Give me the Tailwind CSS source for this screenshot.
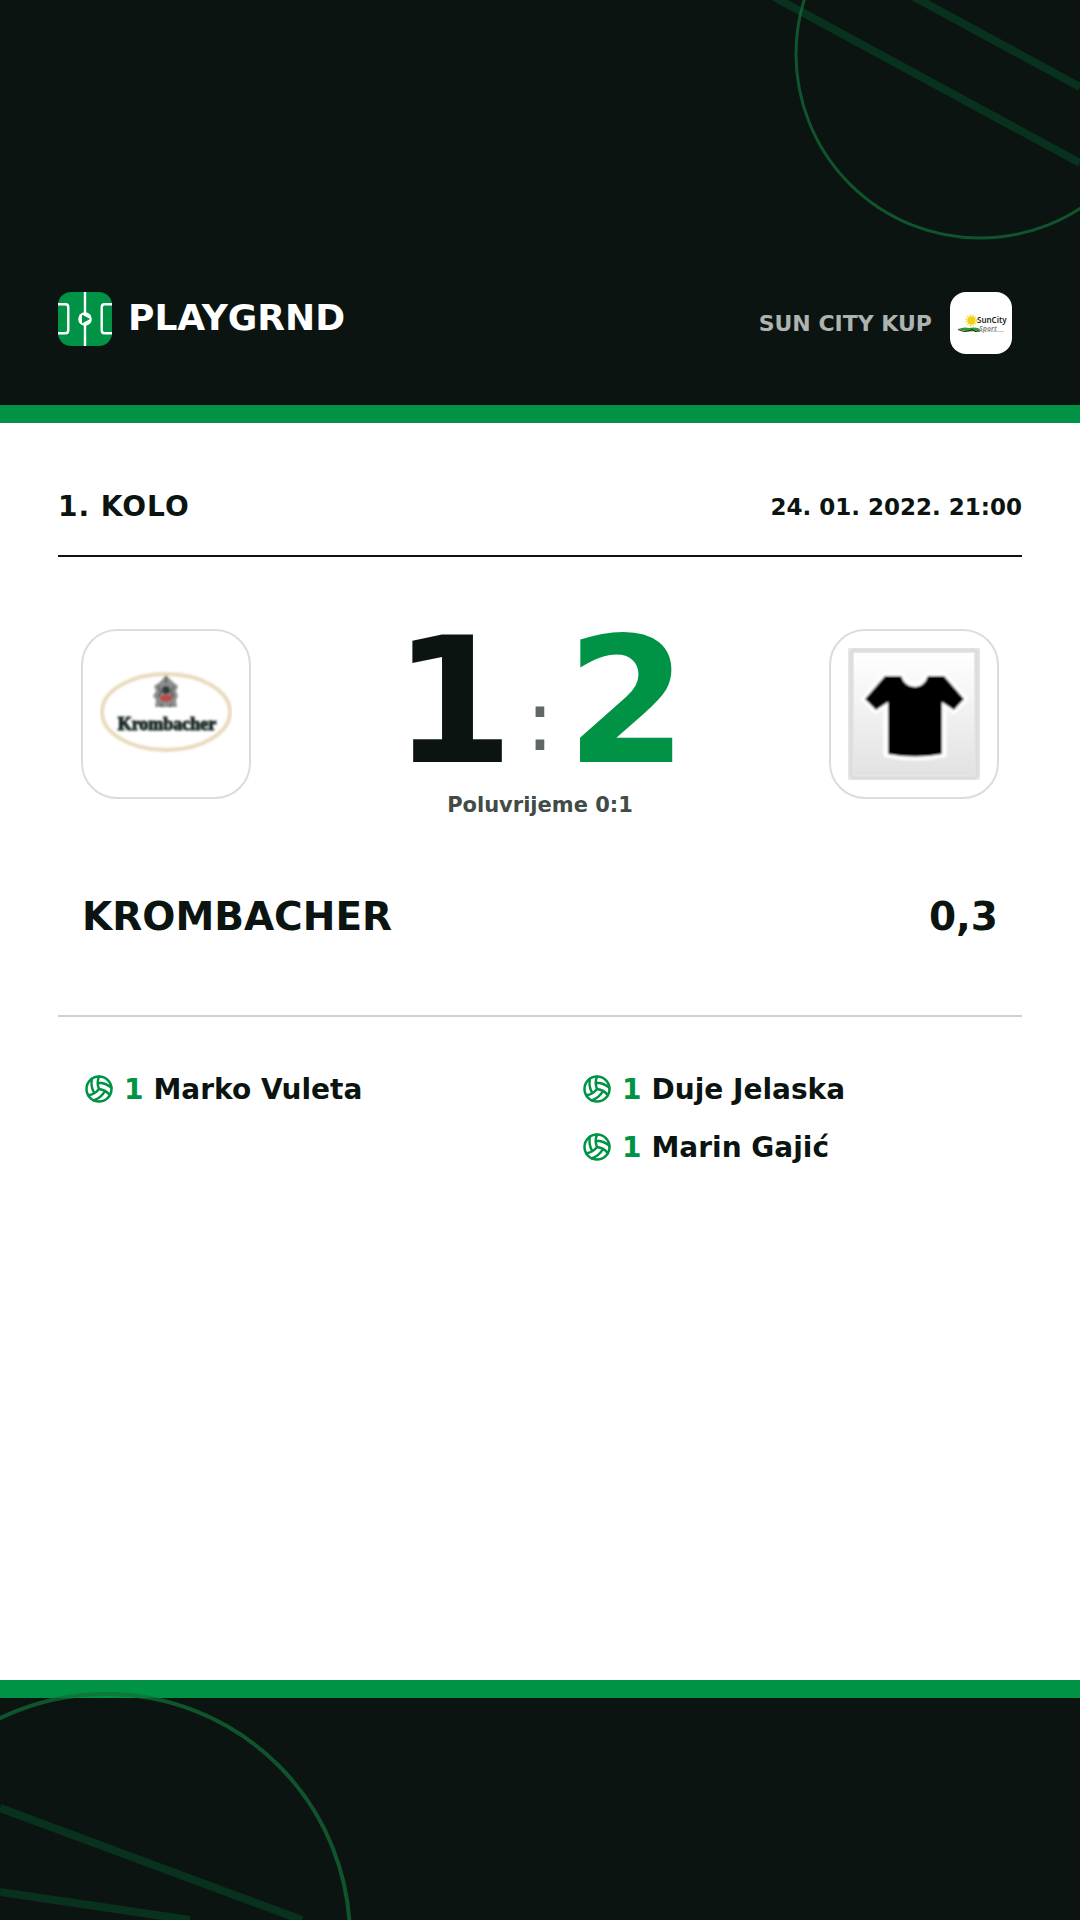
<!DOCTYPE html>
<html lang="hr">
<head>
<meta charset="utf-8">
<meta name="viewport" content="width=device-width, initial-scale=1">
<title>Krombacher 1:2 0,3</title>
<script src="https://cdn.jsdelivr.net/npm/@tailwindcss/browser@4"></script>
</head>
<body class="relative flex min-h-screen flex-col overflow-x-hidden bg-white font-['DejaVu_Sans',sans-serif] font-bold text-[#0b1411]">
<svg width="0" height="0" class="absolute" aria-hidden="true">
  <symbol id="ball" viewBox="0 0 24 24">
    <g fill="none" stroke="currentColor" stroke-width="2" stroke-linecap="round" stroke-linejoin="round">
      <circle cx="12" cy="12" r="10"/>
      <path d="M11.1 7.1a16.55 16.55 0 0 1 10.9 4M12 12a12.6 12.6 0 0 1-8.7 5M16.8 13.6a16.55 16.55 0 0 1-9 7.5M20.7 17a12.8 12.8 0 0 0-8.7-5 13.3 13.3 0 0 1 0-10M6.3 3.8a16.55 16.55 0 0 0 1.9 11.5"/>
    </g>
  </symbol>
</svg>

<header class="relative border-b-18 border-[#009345] bg-[#0b1411] px-[58px] pt-[292px] pb-[51px]">
  <svg class="absolute top-0 right-0" width="340" height="260" viewBox="740 0 340 260" fill="none" aria-hidden="true">
    <path d="M765-8L1080 163M905-8L1080 87" stroke="#009345" stroke-width="8" stroke-opacity=".24"/>
    <circle cx="980" cy="54" r="184" stroke="#116d38" stroke-width="3" stroke-opacity=".72"/>
  </svg>
  <div class="relative flex items-start justify-between">
    <div class="flex items-center gap-4">
      <svg width="54" height="54" viewBox="0 0 54 54" fill="none" aria-hidden="true">
        <rect width="54" height="54" rx="13" fill="#009345"/>
        <path d="M27 0V54M0 12.3H7.5Q10.3 12.3 10.3 15.5V38Q10.3 41.3 7.5 41.3H0M54 12.3H46.5Q43.7 12.3 43.7 15.5V38Q43.7 41.3 46.5 41.3H54" stroke="#fff" stroke-width="2.4"/>
        <circle cx="27" cy="27" r="6.8" fill="#fff"/>
        <path d="M24.5 23.5L31 27L24.5 30.5Z" fill="#009345" stroke="#009345" stroke-width="1.2" stroke-linejoin="round"/>
      </svg>
      <span class="pb-[2px] text-4xl text-white">PLAYGRND</span>
    </div>
    <div class="flex items-center gap-[18px] pr-[10px]">
      <span class="text-[22px] text-[#adb3b0]">SUN CITY KUP</span>
      <svg width="62" height="62" viewBox="0 0 62 62" role="img" aria-label="SunCity Sport">
        <rect width="62" height="62" rx="16" fill="#fff"/>
        <circle cx="21.5" cy="28.5" r="5.3" fill="none" stroke="#f7dc4a" stroke-width="1.5" stroke-dasharray="1.5 1.3"/>
        <circle cx="21.5" cy="28.5" r="4.2" fill="#f5cf12"/>
        <text x="27" y="31" font-size="8" font-weight="600" font-family="Noto Sans, sans-serif" fill="#222">SunCity</text>
        <path d="M8 37Q14 34.5 19 36Q25 35 29 36.5Q31 38 30 39Q26 38.5 22 39.5Q14 39 8 37Z" fill="#2f9b2f"/>
        <path d="M8 37.5L14 39.5L19 39L22 37.5L25 39.5L30 39" fill="none" stroke="#222" stroke-width="1"/>
        <text x="29" y="39" font-size="7" font-style="italic" font-weight="700" font-family="Open Sans, sans-serif" fill="#8a8a8a">Sport</text>
        <path d="M30 39.5H54" stroke="#bbb" stroke-width=".8"/>
      </svg>
    </div>
  </div>
</header>

<main class="flex-1 px-[58px]">
  <div class="flex items-center justify-between border-b-2 border-[#0b1411] pt-[64px] pb-[28px]">
    <h2 class="text-[28px] leading-10 tracking-[1px]">1. KOLO</h2>
    <time datetime="2022-01-24T21:00" class="text-[23px] leading-10">24. 01. 2022. 21:00</time>
  </div>

  <section class="border-b-2 border-[#cdd3d0] px-[23px] pt-[72px] pb-[68px]">
    <div class="flex items-start justify-between">
      <div class="grid size-[170px] place-items-center rounded-[36px] border-2 border-[#d9dddb]">
        <svg width="132" height="132" viewBox="0 0 132 132" role="img" aria-label="Krombacher">
          <defs><filter id="soft"><feGaussianBlur stdDeviation=".8"/></filter></defs>
          <g filter="url(#soft)">
            <ellipse cx="66" cy="64" rx="64" ry="38" fill="none" stroke="#e8dabb" stroke-width="4"/>
            <path d="M66 27L73 34L78 38L76 43L78 48L76 52L77 59H55L56 52L53 48L56 43L54 38L60 34Z" fill="#8b8f8d"/>
            <path d="M58 38L61 44L58 49M74 38L71 44L74 49M60 56L63 59M72 56L69 59M66 29V35" stroke="#4d5552" stroke-width="1.5" fill="none"/>
            <circle cx="66" cy="42" r="4" fill="#303835"/>
            <path d="M60 48Q66 45 73 48L72 52Q66 56 60 52Z" fill="#b84c4c"/>
            <text x="67" y="82" text-anchor="middle" font-size="18" font-weight="700" font-family="Liberation Serif, serif" fill="#1d2b27" stroke="#1d2b27" stroke-width="1.2">Krombacher</text>
          </g>
        </svg>
      </div>

      <div class="flex flex-col items-center">
        <div class="flex items-start gap-3 leading-[146px]">
          <span class="text-[174px]">1</span>
          <span class="pt-[50px] text-[84px] leading-[84px] font-normal text-[#616864]">:</span>
          <span class="text-[174px] text-[#009345]">2</span>
        </div>
        <p class="pt-4 text-[21px] leading-7 text-[#434b47]">Poluvrijeme 0:1</p>
      </div>

      <div class="grid size-[170px] place-items-center rounded-[36px] border-2 border-[#d9dddb]">
        <svg width="132" height="132" viewBox="0 0 132 132" aria-hidden="true">
          <defs>
            <linearGradient id="tile" x2="0" y2="1"><stop stop-color="#fff"/><stop offset="1" stop-color="#e2e2e2"/></linearGradient>
            <filter id="shade"><feGaussianBlur stdDeviation="1"/></filter>
          </defs>
          <rect width="132" height="132" fill="#e9ebea"/>
          <rect x="3" y="2" width="126" height="128" rx="3" fill="none" stroke="#d6dad8" stroke-width="3" filter="url(#shade)"/>
          <rect x="6" y="5" width="120" height="122" fill="url(#tile)"/>
          <g filter="url(#shade)">
            <path d="M37 28H54Q58 38 67 38Q76 38 79 28H96L116 51L106 62L95 54V106Q67 112 39 106V54L28 62L17 51Z" fill="#fff" stroke="#fff" stroke-width="7"/>
            <path d="M37 28H53Q57 39 67 39Q76 39 80 28H96L116 51L106 62L94 54V106Q67 111 40 106V54L28 62L17 51Z" fill="#000"/>
          </g>
        </svg>
      </div>
    </div>

    <div class="flex justify-between px-px pt-[68px] text-[39px] leading-[60px]">
      <h1>KROMBACHER</h1>
      <h1>0,3</h1>
    </div>
  </section>

  <section class="grid grid-cols-2 gap-x-[58px] pt-[44px] pl-[26px] text-[28px] leading-[58px]">
    <ul>
      <li class="flex items-center gap-[10px]"><svg class="mb-[2px] size-[30px] text-[#009345]"><use href="#ball"/></svg><span class="text-[#009345]">1</span><span>Marko Vuleta</span></li>
    </ul>
    <ul>
      <li class="flex items-center gap-[10px]"><svg class="mb-[2px] size-[30px] text-[#009345]"><use href="#ball"/></svg><span class="text-[#009345]">1</span><span>Duje Jelaska</span></li>
      <li class="flex items-center gap-[10px]"><svg class="mb-[2px] size-[30px] text-[#009345]"><use href="#ball"/></svg><span class="text-[#009345]">1</span><span>Marin Gajić</span></li>
    </ul>
  </section>
</main>

<footer class="relative h-60 border-t-18 border-[#009345] bg-[#0b1411]">
  <svg class="absolute bottom-0 left-0" width="380" height="240" viewBox="0 1680 380 240" fill="none" aria-hidden="true">
    <path d="M0 1808L302 1920M0 1892L190 1920" stroke="#009345" stroke-width="8" stroke-opacity=".24"/>
    <circle cx="106" cy="1938" r="244" stroke="#116d38" stroke-width="4" stroke-opacity=".72"/>
  </svg>
</footer>
</body>
</html>
